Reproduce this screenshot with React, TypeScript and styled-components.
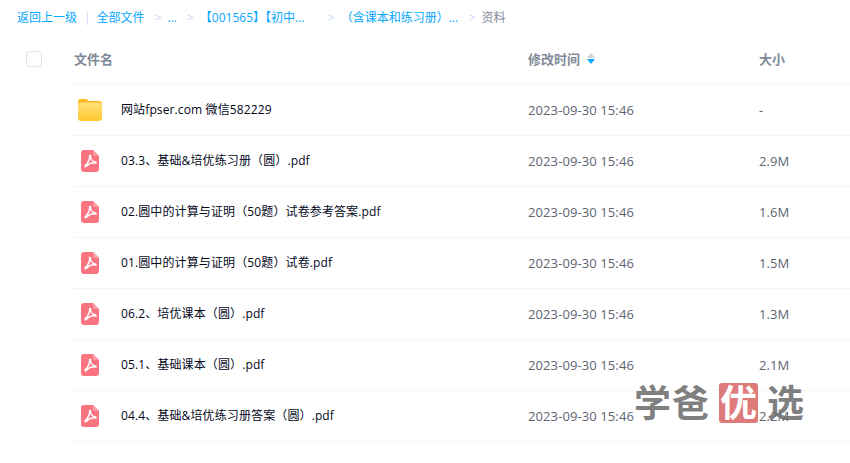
import { FC } from "react";
import { createGlobalStyle, styled } from "styled-components";

interface FileItem {
  name: string;
  time: string;
  size: string;
  folder?: boolean;
}

const files: FileItem[] = [
  { name: "网站fpser.com 微信582229", time: "2023-09-30 15:46", size: "-", folder: true },
  { name: "03.3、基础&培优练习册（圆）.pdf", time: "2023-09-30 15:46", size: "2.9M" },
  { name: "02.圆中的计算与证明（50题）试卷参考答案.pdf", time: "2023-09-30 15:46", size: "1.6M" },
  { name: "01.圆中的计算与证明（50题）试卷.pdf", time: "2023-09-30 15:46", size: "1.5M" },
  { name: "06.2、培优课本（圆）.pdf", time: "2023-09-30 15:46", size: "1.3M" },
  { name: "05.1、基础课本（圆）.pdf", time: "2023-09-30 15:46", size: "2.1M" },
  { name: "04.4、基础&培优练习册答案（圆）.pdf", time: "2023-09-30 15:46", size: "2.2M" },
];

const FolderIcon: FC = () => (
  <svg width="24" height="22" viewBox="0 0 24 22">
    <defs>
      <linearGradient id="folderFill" x1="0" y1="0" x2="0" y2="1">
        <stop offset="0" stopColor="#ffe27a" />
        <stop offset="1" stopColor="#ffc62e" />
      </linearGradient>
    </defs>
    <path
      d="M0 2.6C0 1 1.1 0 2.4 0h5.2c1 0 1.5.3 2.1.9l1.1 1h10.8c1.4 0 2.4 1 2.4 2.4V9H0z"
      fill="#ffb81f"
    />
    <rect x="0" y="3.6" width="24" height="18.4" rx="2.4" fill="url(#folderFill)" />
  </svg>
);

const PdfIcon: FC = () => (
  <svg width="18" height="22" viewBox="0 0 18 22">
    <path
      d="M3 0h9l6 6v13c0 1.7-1.3 3-3 3H3c-1.7 0-3-1.3-3-3V3c0-1.7 1.3-3 3-3z"
      fill="#fb7480"
    />
    <path d="M12 0l6 6h-4c-1.1 0-2-.9-2-2z" fill="#fd9ea6" />
    <path
      d="M8.6 5.6c.5 3-1.4 7-4.3 10.2-.6.7.1 1.1.7.6 2.3-2.1 6.4-3.9 9.4-3.4.9.1.9-.7 0-.9-2.8-.6-5.1-3.3-4.9-6.5"
      fill="none"
      stroke="#fff"
      strokeWidth="1.5"
      strokeLinecap="round"
      strokeLinejoin="round"
    />
  </svg>
);

const App: FC = () => (
  <>
    <GlobalStyle />
    <Page>
      <Breadcrumb>
        <CrumbLink>返回上一级</CrumbLink>
        <Divider>|</Divider>
        <CrumbLink>全部文件</CrumbLink>
        <Arrow>&gt;</Arrow>
        <CrumbLink>...</CrumbLink>
        <Arrow>&gt;</Arrow>
        <CrumbTitle $width={109}>【001565】【初中...</CrumbTitle>
        <Arrow $wide>&gt;</Arrow>
        <CrumbTitle $width={118}>（含课本和练习册）...</CrumbTitle>
        <Arrow>&gt;</Arrow>
        <CrumbCurrent>资料</CrumbCurrent>
      </Breadcrumb>
      <HeaderRow>
        <CheckCell>
          <CheckBox />
        </CheckCell>
        <HeaderCells>
          <NameHead>文件名</NameHead>
          <TimeHead>
            修改时间
            <SortMark>
              <SortUp />
              <SortDown />
            </SortMark>
          </TimeHead>
          <HeadLabel>大小</HeadLabel>
        </HeaderCells>
      </HeaderRow>
      <FileList>
        {files.map((file) => (
          <FileRow key={file.name}>
            <IconCell $folder={file.folder}>
              {file.folder ? <FolderIcon /> : <PdfIcon />}
            </IconCell>
            <FileName>{file.name}</FileName>
            <FileMeta>{file.time}</FileMeta>
            <FileMeta>{file.size}</FileMeta>
          </FileRow>
        ))}
      </FileList>
      <Watermark>
        <WatermarkWord>学爸</WatermarkWord>
        <WatermarkSeal>优</WatermarkSeal>
        <WatermarkWord>选</WatermarkWord>
      </Watermark>
    </Page>
  </>
);

export default App;

const GlobalStyle = createGlobalStyle`
  html, body {
    margin: 0;
    padding: 0;
    background: #fff;
  }

  body {
    font-family: "Open Sans", "Noto Sans CJK SC", sans-serif;
  }
`;

const Page = styled.div`
  position: relative;
  width: 850px;
  height: 463px;
  overflow: hidden;
`;

const Breadcrumb = styled.div`
  display: flex;
  align-items: center;
  height: 35px;
  padding-left: 17px;
  font-size: 12px;
  line-height: 16px;
  white-space: nowrap;
`;

const CrumbLink = styled.span`
  color: #06a7ff;
`;

const CrumbTitle = styled(CrumbLink)<{ $width: number }>`
  width: ${(p) => p.$width}px;
  overflow: hidden;
`;

const CrumbCurrent = styled.span`
  color: #818999;
`;

const Divider = styled.span`
  margin: 0 6px 0 7px;
  color: #c4d8f4;
`;

const Arrow = styled.span<{ $wide?: boolean }>`
  margin: 0 6px 0 ${(p) => (p.$wide ? 19 : 10)}px;
  color: #c4d8f4;
`;

const HeaderRow = styled.div`
  display: flex;
  height: 50px;
`;

const CheckCell = styled.div`
  display: flex;
  align-items: center;
  width: 73px;
  padding: 0 0 2px 26px;
  box-sizing: border-box;
`;

const CheckBox = styled.div`
  width: 14px;
  height: 14px;
  border: 1px solid #e3e4e8;
  border-radius: 4px;
`;

const HeaderCells = styled.div`
  display: flex;
  flex: 1;
  align-items: center;
  padding-bottom: 2px;
  border-bottom: 1px solid #f5f5f6;
  font-size: 13px;
  font-weight: 700;
  color: #818999;
`;

const HeadLabel = styled.div`
  line-height: 16px;
`;

const NameHead = styled(HeadLabel)`
  width: 455px;
  padding-left: 1px;
  box-sizing: border-box;
`;

const TimeHead = styled(HeadLabel)`
  display: flex;
  align-items: center;
  width: 231px;
`;

const SortMark = styled.span`
  display: flex;
  flex-direction: column;
  align-items: center;
  gap: 1px;
  margin-left: 7px;
`;

const SortUp = styled.i`
  width: 0;
  height: 0;
  border: 4px solid transparent;
  border-top: 0;
  border-bottom: 5px solid #cfd2da;
`;

const SortDown = styled.i`
  width: 0;
  height: 0;
  border: 4px solid transparent;
  border-bottom: 0;
  border-top: 5px solid #06a7ff;
`;

const FileList = styled.div`
  display: flex;
  flex-direction: column;
  margin-left: 73px;
`;

const FileRow = styled.div`
  display: grid;
  grid-template-columns: 48px 407px 231px 1fr;
  align-items: center;
  height: 50px;
  border-bottom: 1px solid #f5f5f6;
`;

const IconCell = styled.div<{ $folder?: boolean }>`
  display: flex;
  align-items: center;
  padding-left: ${(p) => (p.$folder ? 5 : 8)}px;
`;

const FileName = styled.div`
  font-size: 12px;
  line-height: 16px;
  letter-spacing: 0.12px;
  color: #03081a;
`;

const FileMeta = styled.div`
  font-size: 13px;
  line-height: 16px;
  letter-spacing: 0.1px;
  color: #5d6472;
`;

const Watermark = styled.div`
  position: absolute;
  left: 634px;
  top: 382px;
  display: flex;
  align-items: center;
  gap: 9px;
  font-weight: 700;
  font-size: 37px;
  line-height: 42px;
  color: rgba(110, 110, 110, 0.88);
`;

const WatermarkWord = styled.span`
  letter-spacing: 1px;
`;

const WatermarkSeal = styled.span`
  display: flex;
  align-items: center;
  justify-content: center;
  width: 39px;
  height: 40px;
  border-radius: 3px;
  background: #df7a7a;
  color: #fff;
`;
